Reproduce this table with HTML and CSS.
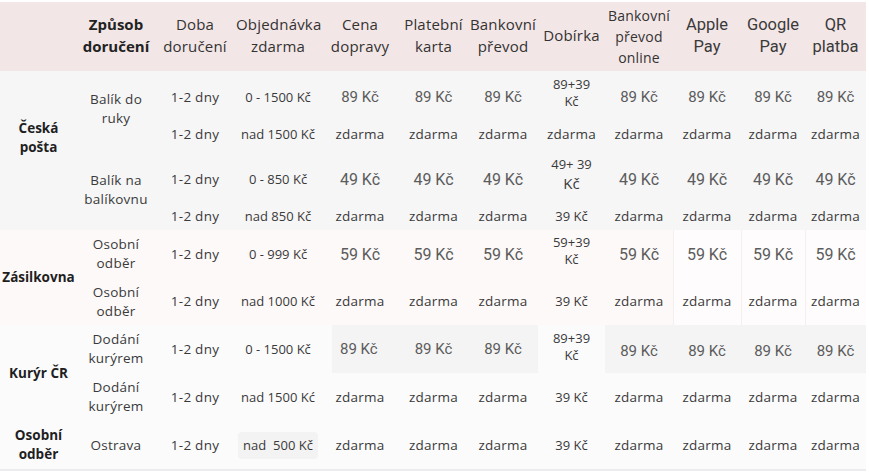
FILE: index.html
```html
<!DOCTYPE html>
<html lang="cs">
<head>
<meta charset="utf-8">
<title>Doprava a platba</title>
<link rel="stylesheet" href="styles.css">
</head>
<body>
<table class="ship">
  <colgroup>
    <col class="c1"><col class="c2"><col class="c3"><col class="c4"><col class="c5"><col class="c6">
    <col class="c7"><col class="c8"><col class="c9"><col class="c10"><col class="c11"><col class="c12">
  </colgroup>
  <thead>
    <tr class="head">
      <th></th>
      <th class="bold">Způsob<br>doručení</th>
      <th>Doba<br>doručení</th>
      <th>Objednávka<br>zdarma</th>
      <th>Cena<br>dopravy</th>
      <th>Platební<br>karta</th>
      <th>Bankovní<br>převod</th>
      <th>Dobírka</th>
      <th class="small">Bankovní<br>převod<br>online</th>
      <th class="rb">Apple<br>Pay</th>
      <th class="rb">Google<br>Pay</th>
      <th class="rb">QR<br>platba</th>
    </tr>
  </thead>
  <tbody class="posta">
    <tr class="r1">
      <td rowspan="4" class="carrier cp">Česká<br>pošta</td>
      <td rowspan="2" class="method m1">Balík do<br>ruky</td>
      <td>1-2 dny</td>
      <td class="sm">0 - 1500 Kč</td>
      <td class="num">89 Kč</td>
      <td class="num">89 Kč</td>
      <td class="num">89 Kč</td>
      <td class="cod">89+39<br>Kč</td>
      <td class="num">89 Kč</td>
      <td class="num">89 Kč</td>
      <td class="num">89 Kč</td>
      <td class="num">89 Kč</td>
    </tr>
    <tr class="r2">
      <td>1-2 dny</td>
      <td class="sm">nad 1500 Kč</td>
      <td>zdarma</td><td>zdarma</td><td>zdarma</td><td>zdarma</td>
      <td>zdarma</td><td>zdarma</td><td>zdarma</td><td>zdarma</td>
    </tr>
    <tr class="r3">
      <td rowspan="2" class="method m3">Balík na<br>balíkovnu</td>
      <td>1-2 dny</td>
      <td class="sm">0 - 850 Kč</td>
      <td class="num big">49 Kč</td>
      <td class="num big">49 Kč</td>
      <td class="num big">49 Kč</td>
      <td class="cod cod2">49+ 39<br><span class="kc">Kč</span></td>
      <td class="num big">49 Kč</td>
      <td class="num big">49 Kč</td>
      <td class="num big">49 Kč</td>
      <td class="num big">49 Kč</td>
    </tr>
    <tr class="r4">
      <td>1-2 dny</td>
      <td class="sm">nad 850 Kč</td>
      <td>zdarma</td><td>zdarma</td><td>zdarma</td><td class="sm">39 Kč</td>
      <td>zdarma</td><td>zdarma</td><td>zdarma</td><td>zdarma</td>
    </tr>
  </tbody>
  <tbody class="zasil">
    <tr class="r5">
      <td rowspan="2" class="carrier">Zásilkovna</td>
      <td class="method">Osobní<br>odběr</td>
      <td>1-2 dny</td>
      <td class="sm">0 - 999 Kč</td>
      <td class="num big">59 Kč</td>
      <td class="num big">59 Kč</td>
      <td class="num big">59 Kč</td>
      <td class="cod cod3">59+39<br>Kč</td>
      <td class="num big">59 Kč</td>
      <td class="num big box">59 Kč</td>
      <td class="num big box">59 Kč</td>
      <td class="num big box">59 Kč</td>
    </tr>
    <tr class="r6">
      <td class="method">Osobní<br>odběr</td>
      <td>1-2 dny</td>
      <td class="sm">nad 1000 Kč</td>
      <td>zdarma</td><td>zdarma</td><td>zdarma</td><td class="sm">39 Kč</td>
      <td>zdarma</td><td class="box">zdarma</td><td class="box">zdarma</td><td class="box">zdarma</td>
    </tr>
  </tbody>
  <tbody class="kuryr">
    <tr class="r7">
      <td rowspan="2" class="carrier">Kurýr ČR</td>
      <td class="method">Dodání<br>kurýrem</td>
      <td>1-2 dny</td>
      <td class="sm">0 - 1500 Kč</td>
      <td class="num grey first left">89 Kč</td>
      <td class="num grey">89 Kč</td>
      <td class="num grey">89 Kč</td>
      <td class="cod cod4">89+39<br>Kč</td>
      <td class="num grey low">89 Kč</td>
      <td class="num grey low">89 Kč</td>
      <td class="num grey low">89 Kč</td>
      <td class="num grey low">89 Kč</td>
    </tr>
    <tr class="r8">
      <td class="method">Dodání<br>kurýrem</td>
      <td>1-2 dny</td>
      <td class="sm">nad 1500 Kć</td>
      <td>zdarma</td><td>zdarma</td><td>zdarma</td><td class="sm">39 Kč</td>
      <td>zdarma</td><td>zdarma</td><td>zdarma</td><td>zdarma</td>
    </tr>
    <tr class="r9">
      <td class="carrier">Osobní<br>odběr</td>
      <td class="method">Ostrava</td>
      <td>1-2 dny</td>
      <td class="sm"><span class="chip">nad&nbsp; 500 Kč</span></td>
      <td>zdarma</td><td>zdarma</td><td>zdarma</td><td class="sm">39 Kč</td>
      <td>zdarma</td><td>zdarma</td><td>zdarma</td><td>zdarma</td>
    </tr>
  </tbody>
</table>
</body>
</html>
```

FILE: styles.css
```css
html, body {
  margin: 0;
  padding: 0;
  background: #ffffff;
}

.ship {
  margin-top: 2px;
  width: 866px;
  table-layout: fixed;
  border-collapse: collapse;
  border-spacing: 0;
  font-family: "Open Sans", "Noto Sans", sans-serif;
  font-size: 13.5px;
  letter-spacing: 0.25px;
  line-height: 19px;
  color: #3a3a3a;
  border-bottom: 2px solid #ececee;
}

.c1 { width: 77px; }
.c2 { width: 78px; }
.c3 { width: 80px; }
.c4 { width: 86px; }
.c5 { width: 78px; }
.c6 { width: 69px; }
.c7 { width: 70px; }
.c8 { width: 67px; }
.c9 { width: 68px; }
.c10 { width: 68px; }
.c11 { width: 64px; }
.c12 { width: 61px; }

th, td {
  padding: 0 1px;
  text-align: center;
  vertical-align: middle;
  white-space: nowrap;
}

.sm {
  font-size: 13px;
  letter-spacing: 0;
}

.head {
  height: 69px;
  background: #f3e6e6;
}

.head th {
  font-weight: 400;
  font-size: 15px;
  letter-spacing: 0.2px;
  line-height: 22px;
  color: #333333;
  padding-bottom: 4px;
}

.head th.bold {
  font-weight: 700;
  color: #222222;
  letter-spacing: 0;
}

.head th.small {
  font-size: 14px;
  line-height: 21px;
  padding-bottom: 0;
}

.head th.rb {
  font-family: Roboto, "Liberation Sans", sans-serif;
  font-size: 16.5px;
  letter-spacing: 0;
  line-height: 22px;
  color: #3a3a3a;
  padding-bottom: 2px;
}

.posta { background: #f6f6f7; }
.zasil { background: #fdf9f9; }
.kuryr { background: #fbfbfc; }

.r1 { height: 47px; }
.r1 td { padding-top: 5px; }
.r2 { height: 32px; }
.r3 { height: 52px; }
.r3 td { padding-top: 6px; }
.r4 { height: 28px; }
.r5 { height: 48px; }
.r6 { height: 47px; }
.r7 { height: 48px; }
.r8 { height: 48px; }
.r9 { height: 49px; }

.r1 td.carrier, .r1 td.method, .r3 td.method { padding-top: 0; }

.carrier {
  font-weight: 700;
  color: #1f1f1f;
  font-size: 13.5px;
  letter-spacing: 0;
  line-height: 19px;
}

.carrier.cp { padding-bottom: 26px; }

.method { line-height: 19px; }
.m1 { padding-bottom: 4px; }
.m3 { padding-top: 10px; }

.num {
  font-family: Roboto, "Liberation Sans", sans-serif;
  font-size: 15px;
  letter-spacing: 0;
  color: #5c5c5c;
}

.num.big { font-size: 16px; }

.cod {
  font-size: 13px;
  letter-spacing: 0;
  line-height: 17px;
}

.r1 td.cod { padding-top: 0; padding-bottom: 4px; }
.cod2 { line-height: 19px; }
.cod2 .kc { font-size: 15px; }
.r3 td.cod2 { padding-top: 0; padding-bottom: 4px; }
.cod3 { padding-bottom: 6px; }
.cod4 { padding-bottom: 4px; }

.box {
  background: #fefcfc;
  box-shadow: inset 1px 0 0 #f6efef;
}

.grey {
  background: #f4f4f5;
}

.grey.first {
  background: linear-gradient(to right, transparent 11px, #f4f4f5 11px);
}

.grey.left {
  text-align: left;
  padding-left: 19px;
}

.grey.low { padding-top: 4px; }

.chip {
  display: inline-block;
  background: #f3f3f4;
  border-radius: 4px;
  padding: 4px 5px;
  line-height: 19px;
}
```
